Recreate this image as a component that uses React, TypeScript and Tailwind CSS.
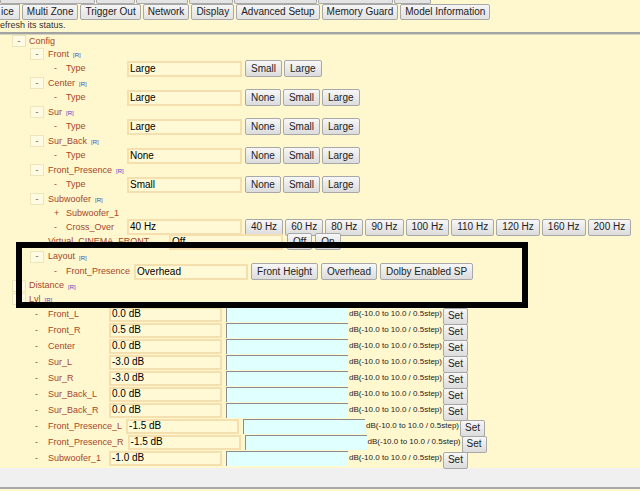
import type { ReactNode } from 'react'

const FONT = "font-['Liberation_Sans',Arial,sans-serif]"
const LABEL = 'whitespace-nowrap text-[9px] leading-none text-[#a5472b]'

const TOP_ROW = ['w-[95px]', 'w-[39px]', 'w-[52px]', 'w-[44px]', 'w-[83px]', 'w-[75px]', 'w-[37px]']
const TABS = ['Multi Zone', 'Trigger Out', 'Network', 'Display', 'Advanced Setup', 'Memory Guard', 'Model Information']
const HZ = ['40 Hz', '60 Hz', '80 Hz', '90 Hz', '100 Hz', '110 Hz', '120 Hz', '160 Hz', '200 Hz']

const LEVELS = [
  { label: 'Front_L', value: '0.0 dB' },
  { label: 'Front_R', value: '0.5 dB' },
  { label: 'Center', value: '0.0 dB' },
  { label: 'Sur_L', value: '-3.0 dB' },
  { label: 'Sur_R', value: '-3.0 dB' },
  { label: 'Sur_Back_L', value: '0.0 dB' },
  { label: 'Sur_Back_R', value: '0.0 dB' },
  { label: 'Front_Presence_L', value: '-1.5 dB' },
  { label: 'Front_Presence_R', value: '-1.5 dB' },
  { label: 'Subwoofer_1', value: '-1.0 dB' },
]

function Btn({ children, pad = 'px-[5px]' }: { children: ReactNode; pad?: string }) {
  return (
    <button className={`h-[17px] shrink-0 whitespace-nowrap rounded-[2px] border border-[#a8a8a8] bg-linear-to-b from-[#f7f7f7] to-[#dcdcdc] text-[10px] leading-none text-[#222] ${pad}`}>
      {children}
    </button>
  )
}

function R() {
  return <span className="ml-[4px] mt-[2px] text-[6px] leading-none text-[#4646c8]">[R]</span>
}

function Toggle({ sign = '-' }: { sign?: string }) {
  return (
    <span className="flex h-[12px] w-[14px] shrink-0 items-center justify-center border border-[#efe5b9] bg-[#fffbe3] text-[9px] leading-none text-[#6b5a40]">
      {sign}
    </span>
  )
}

function Node({ label, level, h, r = true }: { label: string; level: 1 | 2; h: string; r?: boolean }) {
  return (
    <div className={`flex items-center ${h} ${level === 1 ? 'pl-[12px]' : 'pl-[30px]'}`}>
      <Toggle />
      <span className={`${LABEL} ${level === 1 ? 'ml-[3px]' : 'ml-[4px]'}`}>{label}</span>
      {r && <R />}
    </div>
  )
}

function TanBox({ value, w, h = 'h-[16px]' }: { value: string; w: string; h?: string }) {
  return (
    <div className={`flex shrink-0 items-center border-2 border-[#f6dfae] bg-[#fff9d6] pl-[1px] text-[10px] leading-none text-black ${w} ${h}`}>
      {value}
    </div>
  )
}

function Leaf({ label, value, options, h = 'h-[15px]', sign = '-' }: { label: string; value?: string; options?: string[]; h?: string; sign?: string }) {
  return (
    <div className={`flex items-center pl-[54px] ${h}`}>
      <span className={`${LABEL} w-[12px]`}>{sign}</span>
      <span className={`${LABEL} min-w-[61px] pr-[4px]`}>{label}</span>
      {value !== undefined && <TanBox value={value} w="w-[115px]" />}
      {options && (
        <div className="ml-[3px] flex gap-[2px]">
          {options.map((o) => (
            <Btn key={o}>{o}</Btn>
          ))}
        </div>
      )}
    </div>
  )
}

function LvlRow({ label, value }: { label: string; value: string }) {
  return (
    <div className="flex h-[16px] items-center pl-[35px]">
      <span className={`${LABEL} w-[13px]`}>-</span>
      <span className={`${LABEL} min-w-[61px] pr-[4px]`}>{label}</span>
      <TanBox value={value} w="w-[113px]" h="h-[15px]" />
      <div className="ml-[4px] h-[15px] w-[122px] shrink-0 border-l border-t border-[#8c8c8c] bg-[#e0ffff]" />
      <span className="ml-[1px] whitespace-nowrap text-[8px] leading-none text-[#222]">dB(-10.0 to 10.0 / 0.5step)</span>
      <span className="ml-[1px]">
        <Btn pad="px-[4px]">Set</Btn>
      </span>
    </div>
  )
}

export default function App() {
  return (
    <div className={`relative h-[491px] w-[640px] overflow-hidden bg-[#fff8cf] ${FONT}`}>
      {/* tab rows */}
      <div className="flex h-[4px] gap-[1px] overflow-hidden">
        {TOP_ROW.map((w, i) => (
          <span key={i} className={`h-[4px] shrink-0 rounded-b-[2px] border-x border-b border-[#a8a8a8] bg-[#e4e4e4] ${w}`} />
        ))}
      </div>
      <div className="flex h-[16px] gap-[2px]">
        <button className="-ml-[2px] h-[16px] shrink-0 border border-[#a8a8a8] bg-linear-to-b from-[#f5f5f5] to-[#e2e2e2] pl-[2px] pr-[5px] text-[10px] leading-none text-[#222]">
          ice
        </button>
        {TABS.map((t) => (
          <button key={t} className="h-[16px] shrink-0 whitespace-nowrap rounded-[2px] border border-[#a8a8a8] bg-linear-to-b from-[#f5f5f5] to-[#e2e2e2] px-[4px] text-[10px] leading-none text-[#222]">
            {t}
          </button>
        ))}
      </div>
      <div className="flex h-[11px] items-center text-[9px] leading-none text-[#333]">efresh its status.</div>
      <div className="mt-[1px] h-[3px] border-t-2 border-b border-t-[#a3a3a3] border-b-[#d6d6c0]" />

      {/* Config tree */}
      <Node label="Config" level={1} h="h-[12px]" r={false} />
      <Node label="Front" level={2} h="h-[14px]" />
      <Leaf label="Type" value="Large" options={['Small', 'Large']} />
      <Node label="Center" level={2} h="h-[14px]" />
      <Leaf label="Type" value="Large" options={['None', 'Small', 'Large']} />
      <Node label="Sur" level={2} h="h-[14px]" />
      <Leaf label="Type" value="Large" options={['None', 'Small', 'Large']} />
      <Node label="Sur_Back" level={2} h="h-[14px]" />
      <Leaf label="Type" value="None" options={['None', 'Small', 'Large']} />
      <Node label="Front_Presence" level={2} h="h-[14px]" />
      <Leaf label="Type" value="Small" options={['None', 'Small', 'Large']} />
      <Node label="Subwoofer" level={2} h="h-[14px]" />
      <Leaf label="Subwoofer_1" sign="+" h="h-[14px]" />
      <Leaf label="Cross_Over" value="40 Hz" options={HZ} h="h-[14px]" />
      <div className="flex h-[15px] items-center pl-[48px]">
        <span className={`${LABEL} min-w-[121px]`}>Virtual_CINEMA_FRONT</span>
        <TanBox value="Off" w="w-[114px]" />
        <div className="ml-[4px] flex gap-[3px]">
          <Btn>Off</Btn>
          <Btn>On</Btn>
        </div>
      </div>
      <Node label="Layout" level={2} h="h-[15px]" />
      <div className="flex h-[15px] items-center pl-[54px]">
        <span className={`${LABEL} w-[12px]`}>-</span>
        <span className={`${LABEL} min-w-[61px] pr-[4px]`}>Front_Presence</span>
        <TanBox value="Overhead" w="w-[114px]" />
        <div className="ml-[3px] flex gap-[3px]">
          <Btn>Front Height</Btn>
          <Btn>Overhead</Btn>
          <Btn>Dolby Enabled SP</Btn>
        </div>
      </div>
      <Node label="Distance" level={1} h="h-[13px]" />
      <Node label="Lvl" level={1} h="h-[14px]" />
      {LEVELS.map((l) => (
        <LvlRow key={l.label} label={l.label} value={l.value} />
      ))}

      {/* footer bar */}
      <div className="mt-[2px] h-[21px] border-b-2 border-[#a8a8a8] bg-[#f0f0f0]" />

      {/* annotation frame */}
      <div className="absolute left-[16px] top-[242px] h-[66px] w-[512px] border-[6px] border-black" />
    </div>
  )
}
